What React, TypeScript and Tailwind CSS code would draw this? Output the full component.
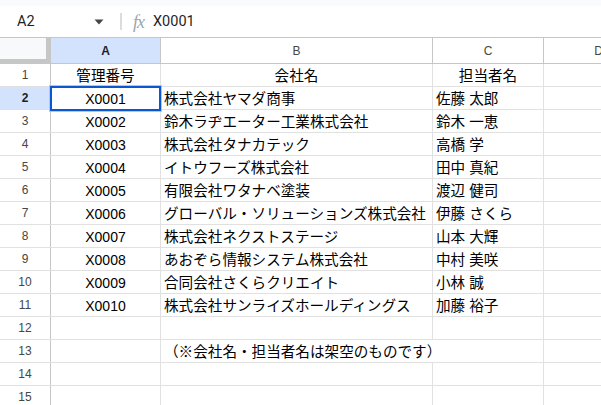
import React from 'react';

const rows: [string, string, string][] = [
  ['X0001', '株式会社ヤマダ商事', '佐藤 太郎'],
  ['X0002', '鈴木ラヂエーター工業株式会社', '鈴木 一恵'],
  ['X0003', '株式会社タナカテック', '高橋 学'],
  ['X0004', 'イトウフーズ株式会社', '田中 真紀'],
  ['X0005', '有限会社ワタナベ塗装', '渡辺 健司'],
  ['X0006', 'グローバル・ソリューションズ株式会社', '伊藤 さくら'],
  ['X0007', '株式会社ネクストステージ', '山本 大輝'],
  ['X0008', 'あおぞら情報システム株式会社', '中村 美咲'],
  ['X0009', '合同会社さくらクリエイト', '小林 誠'],
  ['X0010', '株式会社サンライズホールディングス', '加藤 裕子'],
];

const latin = { fontFamily: '"Liberation Sans", Arial, sans-serif' };
const cjk = { fontFamily: '"Liberation Sans", "Noto Sans CJK JP", sans-serif' };

function RowHead({ n, active }: { n: number; active?: boolean }) {
  return (
    <div
      className={`flex h-full w-[51px] shrink-0 items-center justify-center border-r border-[#c4c7c5] text-[12px] ${
        active ? 'bg-[#d3e3fd] font-bold text-[#1f1f1f]' : 'text-[#444746]'
      }`}
      style={latin}
    >
      {n}
    </div>
  );
}

function Row({
  n,
  a,
  b,
  c,
  header,
  active,
  overflowB,
}: {
  n: number;
  a?: string;
  b?: string;
  c?: string;
  header?: boolean;
  active?: boolean;
  overflowB?: boolean;
}) {
  return (
    <div className="flex h-[23px] border-b border-[#e1e1e1] text-[14.6px] leading-none text-black" style={cjk}>
      <RowHead n={n} active={active} />
      <div className="flex w-[110px] shrink-0 items-center justify-center border-r border-[#e1e1e1] pt-[2px]">
        <span className={header ? '' : 'text-[14px]'} style={header ? cjk : latin}>
          {a}
        </span>
      </div>
      <div
        className={`flex w-[272px] shrink-0 items-center pt-[2px] ${header ? 'justify-center' : 'px-[3px]'} ${
          overflowB ? 'relative z-10 overflow-visible whitespace-nowrap' : 'border-r border-[#e1e1e1]'
        }`}
      >
        {b}
      </div>
      <div
        className={`flex w-[111px] shrink-0 items-center border-r border-[#e1e1e1] pt-[2px] ${
          header ? 'justify-center' : 'px-[3px]'
        } ${overflowB ? 'border-l border-l-white' : ''}`}
      >
        {c}
      </div>
      <div className="w-[110px] shrink-0 border-r border-[#e1e1e1]" />
    </div>
  );
}

export default function App() {
  return (
    <div className="h-[405px] w-[601px] overflow-hidden bg-white">
      <div className="h-[6px] bg-[#f9fbfd]" />
      <div className="flex h-[31px] items-center">
        <span className="ml-[17px] w-[70px] text-[14.5px] text-[#1f1f1f]" style={{ fontFamily: 'Roboto, sans-serif' }}>
          A2
        </span>
        <svg width="10" height="6" viewBox="0 0 10 6" className="ml-[7px]">
          <path d="M0.5 0.5h9L5 5.5z" fill="#444746" />
        </svg>
        <div className="ml-[16px] h-[17px] w-[2px] bg-[#dadce0]" />
        <span
          className="ml-[11px] text-[18px] italic leading-none text-[#a0a4a8]"
          style={{ fontFamily: '"Liberation Serif", serif', letterSpacing: '-1px' }}
        >
          fx
        </span>
        <span className="ml-[9px] text-[14.5px] text-[#1f1f1f]" style={{ fontFamily: 'Roboto, sans-serif' }}>
          X0001
        </span>
      </div>

      <div className="relative">
        {/* column header */}
        <div className="flex h-[27px] border-y border-[#c4c7c5] text-[12px] text-[#444746]" style={latin}>
          <div className="relative w-[51px] shrink-0 border-r border-[#c4c7c5] bg-[#f8f9fa]">
            <div className="absolute right-0 top-0 h-full w-[4px] bg-[#c4c7c5]" />
            <div className="absolute bottom-0 left-0 h-[4px] w-full bg-[#c4c7c5]" />
          </div>
          <div className="flex w-[110px] shrink-0 items-center justify-center border-r border-[#c4c7c5] bg-[#d3e3fd] font-bold text-[#1f1f1f]">
            A
          </div>
          <div className="flex w-[272px] shrink-0 items-center justify-center border-r border-[#c4c7c5]">B</div>
          <div className="flex w-[111px] shrink-0 items-center justify-center border-r border-[#c4c7c5]">C</div>
          <div className="flex w-[110px] shrink-0 items-center justify-center border-r border-[#c4c7c5]">D</div>
        </div>

        <Row n={1} a="管理番号" b="会社名" c="担当者名" header />
        {rows.map((r, i) => (
          <Row key={r[0]} n={i + 2} a={r[0]} b={r[1]} c={r[2]} active={i === 0} />
        ))}
        <Row n={12} />
        <Row n={13} b="（※会社名・担当者名は架空のものです）" overflowB />
        <Row n={14} />
        <Row n={15} />

        {/* selected cell A2 */}
        <div className="absolute left-[50px] top-[49px] h-[25px] w-[111px] border-2 border-[#0b57d0] shadow-[0_0_0_1px_#a8c7fa]" />
      </div>
    </div>
  );
}
